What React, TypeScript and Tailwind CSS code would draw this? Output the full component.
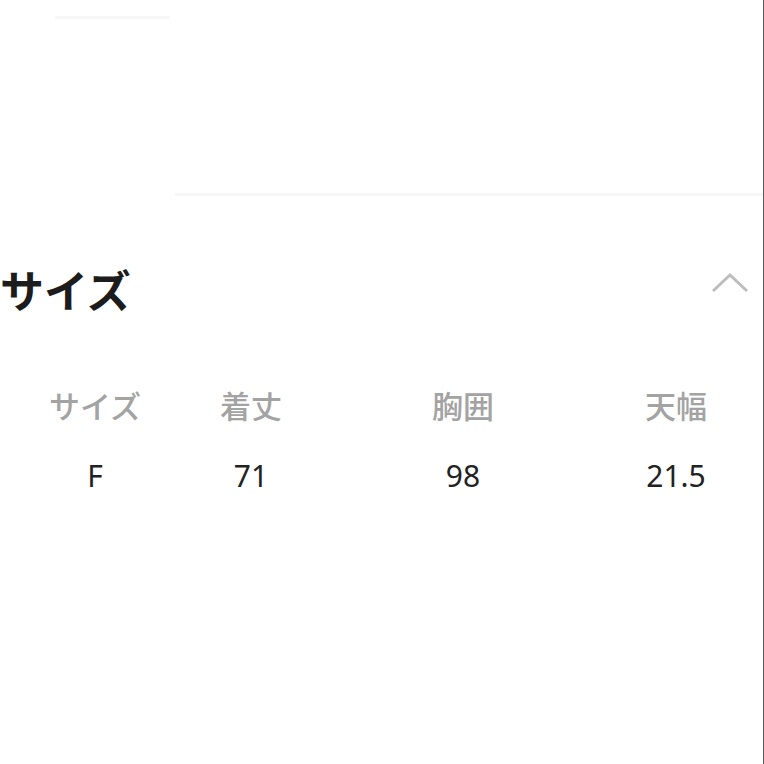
const font = { fontFamily: '"Noto Sans CJK JP", "Noto Sans", sans-serif' };

const headers = ["サイズ", "着丈", "胸囲", "天幅"];
const values = ["F", "71", "98", "21.5"];

export default function App() {
  return (
    <div className="w-[764px] h-[764px] bg-white border-r border-[#5a5a5a] overflow-hidden" style={font}>
      <div className="h-[193px] flex flex-col">
        <div className="mt-[16px] ml-[55px] w-[115px] h-[3px] bg-[#f7f7f7]" />
      </div>
      <div className="ml-[175px] h-[3px] bg-[#f6f6f6]" />

      <div className="flex items-center justify-between mt-[71px] pr-[14px]">
        <h2 className="text-[44px] font-bold leading-none text-[#1c1c1c]">サイズ</h2>
        <svg width="38" height="22" viewBox="0 0 38 22" className="-mt-[12px]">
          <path d="M2 19 L19 3 L36 19" fill="none" stroke="#bdbdbd" strokeWidth="3" />
        </svg>
      </div>

      <div className="mt-[78px] pl-[20px]">
        <div className="grid grid-cols-[150px_162px_262px_164px] text-[31px] leading-none font-medium text-[#a3a3a3]">
          {headers.map((h) => (
            <div key={h} className="text-center">{h}</div>
          ))}
        </div>
        <div className="grid grid-cols-[150px_162px_262px_164px] mt-[41px] text-[30px] leading-none text-[#222]">
          {values.map((v) => (
            <div key={v} className="text-center" style={{ fontFamily: '"Noto Sans", sans-serif' }}>{v}</div>
          ))}
        </div>
      </div>
    </div>
  );
}
